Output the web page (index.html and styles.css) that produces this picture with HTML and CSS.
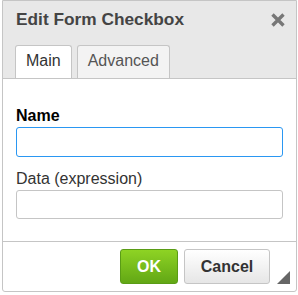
FILE: index.html
```html
<!DOCTYPE html>
<html lang="en">
<head>
    <meta charset="UTF-8">
    <title>Edit Form Checkbox</title>
    <link rel="stylesheet" href="styles.css">
</head>
<body>

    <div class="dialog">
        <div class="dialog-head">
            <div class="title-row">
                <h1>Edit Form Checkbox</h1>
                <button class="close" aria-label="Close">
                    <svg width="14" height="14" viewBox="0 0 14 14">
                        <path d="M1.5 1.5 L12.5 12.5 M12.5 1.5 L1.5 12.5" stroke="#777" stroke-width="3.4" fill="none"/>
                    </svg>
                </button>
            </div>
            <div class="tabs">
                <div class="tab active">Main</div>
                <div class="tab">Advanced</div>
            </div>
        </div>

        <div class="dialog-body">
            <label class="field-label strong" for="name">Name</label>
            <input class="field focus" id="name" type="text">
            <label class="field-label" for="data">Data (expression)</label>
            <input class="field" id="data" type="text">
        </div>

        <div class="dialog-foot">
            <button class="btn btn-ok">OK</button>
            <button class="btn btn-cancel">Cancel</button>
            <span class="resize"></span>
        </div>
    </div>

</body>
</html>
```

FILE: styles.css
```css
* {
    box-sizing: border-box;
    margin: 0;
    padding: 0;
    font-family: "Liberation Sans", Arial, sans-serif;
}

body {
    background: #fff;
    padding: 0 2px;
}

.dialog {
    position: relative;
    width: 295px;
    border: 1px solid #c5c5c5;
    border-radius: 0 0 3px 3px;
    background: #fff;
}

.dialog-head {
    background: #e8e8e8;
    border-bottom: 1px solid #c5c5c5;
    padding: 0 0 0 12px;
}

.title-row {
    display: flex;
    justify-content: space-between;
    align-items: flex-start;
    padding: 8px 11px 0 1px;
    height: 44px;
}

h1 {
    font-size: 17.3px;
    line-height: 20px;
    font-weight: bold;
    color: #444;
}

.close {
    border: none;
    background: none;
    padding: 0;
    margin-top: 4px;
    line-height: 0;
}

.tabs {
    display: flex;
    gap: 5px;
    align-items: flex-end;
}

.tab {
    font-size: 16px;
    line-height: 20px;
    color: #555;
    padding: 5px 10px 7px;
    background: #f3f3f3;
    border: 1px solid #c5c5c5;
    border-bottom: none;
    border-radius: 3px 3px 0 0;
}

.tab.active {
    background: #fff;
    color: #333;
}

.dialog-body {
    padding: 27px 13px 22px 13px;
}

.field-label {
    display: block;
    font-size: 16px;
    line-height: 19px;
    color: #333;
    margin-bottom: 2px;
}

.field-label.strong {
    font-weight: bold;
    color: #000;
}

.field {
    display: block;
    width: 100%;
    height: 30px;
    border: 1px solid #c5c5c5;
    border-radius: 3px;
    background: #fff;
    outline: none;
    margin-bottom: 12px;
}

.field.focus {
    border-color: #2a97f2;
}

.field:last-child {
    height: 29px;
    margin-bottom: 0;
}

.dialog-foot {
    display: flex;
    justify-content: flex-end;
    gap: 6px;
    border-top: 1px solid #c5c5c5;
    padding: 7px 26px 7px 0;
}

.btn {
    height: 35px;
    font-size: 16px;
    font-weight: bold;
    border-radius: 3px;
    cursor: pointer;
}

.btn-ok {
    width: 58px;
    color: #fff;
    background: linear-gradient(#8ed324, #62a715);
    border: 1px solid #5a9c16;
}

.btn-cancel {
    width: 86px;
    color: #333;
    background: linear-gradient(#fff, #e6e6e6);
    border: 1px solid #c5c5c5;
}

.resize {
    position: absolute;
    right: 6px;
    bottom: 7px;
    width: 0;
    height: 0;
    border-left: 13px solid transparent;
    border-bottom: 13px solid #666;
}
```
